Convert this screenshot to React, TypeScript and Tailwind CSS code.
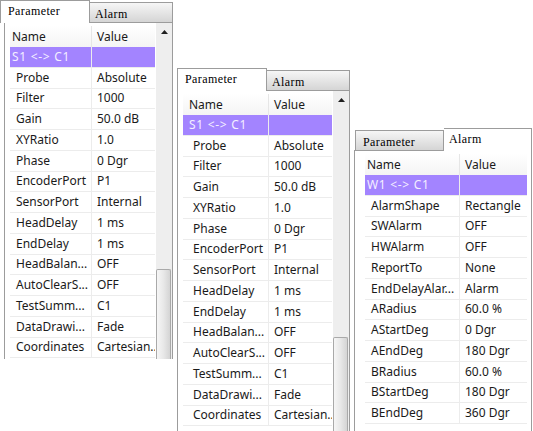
import React from 'react';

type Row = [string, string];

const PARAM_ROWS: Row[] = [
  ['Probe', 'Absolute'],
  ['Filter', '1000'],
  ['Gain', '50.0 dB'],
  ['XYRatio', '1.0'],
  ['Phase', '0 Dgr'],
  ['EncoderPort', 'P1'],
  ['SensorPort', 'Internal'],
  ['HeadDelay', '1 ms'],
  ['EndDelay', '1 ms'],
  ['HeadBalan...', 'OFF'],
  ['AutoClearS...', 'OFF'],
  ['TestSumm...', 'C1'],
  ['DataDrawi...', 'Fade'],
  ['Coordinates', 'Cartesian...'],
];

const ALARM_ROWS: Row[] = [
  ['AlarmShape', 'Rectangle'],
  ['SWAlarm', 'OFF'],
  ['HWAlarm', 'OFF'],
  ['ReportTo', 'None'],
  ['EndDelayAlar...', 'Alarm'],
  ['ARadius', '60.0 %'],
  ['AStartDeg', '0 Dgr'],
  ['AEndDeg', '180 Dgr'],
  ['BRadius', '60.0 %'],
  ['BStartDeg', '180 Dgr'],
  ['BEndDeg', '360 Dgr'],
];

interface PanelProps {
  pos: string;
  frame: string;
  inset: string;
  nameW: string;
  valueW: string;
  headPad: string;
  rowPad: string;
  strip: string;
  active: 'Parameter' | 'Alarm';
  title: string;
  rows: Row[];
  scroll?: boolean;
}

function Scrollbar() {
  return (
    <div className="ml-auto flex h-full w-[16px] flex-none flex-col bg-[#eeeeee]">
      <div className="flex h-[17px] flex-none items-center justify-center">
        <svg width="7" height="4" viewBox="0 0 7 4">
          <path d="M3.5 0L7 4H0z" fill="#1f1f1f" />
        </svg>
      </div>
      <div className="h-[229px] flex-none" />
      <div className="mr-px flex-1 rounded-t-[2px] border border-b-0 border-[#a9a9a9] bg-gradient-to-r from-[#f6f6f6] via-[#e8e8e8] to-[#d4d4d4]" />
    </div>
  );
}

function Panel({ pos, frame, inset, nameW, valueW, headPad, rowPad, strip, active, title, rows, scroll }: PanelProps) {
  const onParam = active === 'Parameter';
  return (
    <div className={`absolute ${pos}`}>
      {/* tabs */}
      <div className={`flex h-[22px] items-end font-['Liberation_Serif',serif] text-[12px] leading-[14px] tracking-[0.4px] text-black ${strip}`}>
        {onParam ? (
          <>
            <div className="relative z-10 -mb-px h-[23px] w-[90px] flex-none border border-b-0 border-[#9c9c9c] bg-white pl-[7px] pt-[3px]">
              Parameter
            </div>
            <div className="h-[20px] flex-1 border border-b-0 border-l-0 border-[#9c9c9c] bg-gradient-to-b from-[#f6f6f6] to-[#d5d5d5] pl-[5px] pt-[4px]">
              Alarm
            </div>
          </>
        ) : (
          <>
            <div className="ml-px h-[20px] w-[89px] flex-none border border-b-0 border-[#9c9c9c] bg-gradient-to-b from-[#f6f6f6] to-[#d5d5d5] pl-[7px] pt-[4px]">
              Parameter
            </div>
            <div className="relative z-10 -mb-px h-[23px] flex-1 border border-b-0 border-l-0 border-[#9c9c9c] bg-white pl-[5px] pt-[3px]">
              Alarm
            </div>
          </>
        )}
      </div>

      {/* page frame */}
      <div className={`flex w-full overflow-hidden border border-b-0 border-[#9c9c9c] bg-white ${frame}`}>
        <div className={`flex-none pt-[3px] ${inset}`}>
          <div className="font-['Noto_Sans',sans-serif] text-[12px] leading-none text-[#1a1a1a]">
            <div className="flex h-[21px] bg-gradient-to-b from-white to-[#f4f4f4]">
              <div className={`flex items-center ${nameW} ${headPad}`}>Name</div>
              <div className={`flex items-center border-l border-[#e6e6e6] pl-[5px] ${valueW}`}>Value</div>
            </div>
            <div className="flex h-[20.75px] border-b border-[#ececec]">
              <div className={`flex items-center whitespace-nowrap bg-[#a384ff] tracking-[0.7px] text-[#f3efff] ${nameW} ${headPad}`}>
                {title}
              </div>
              <div className={`border-l border-[#ececec] bg-[#a384ff] ${valueW}`} />
            </div>
            {rows.map(([name, value]) => (
              <div key={name} className="flex h-[20.75px] border-b border-[#ececec]">
                <div className={`flex items-center overflow-hidden whitespace-nowrap ${nameW} ${rowPad}`}>{name}</div>
                <div className={`flex items-center overflow-hidden whitespace-nowrap border-l border-[#ececec] pl-[5px] ${valueW}`}>
                  {value}
                </div>
              </div>
            ))}
          </div>
        </div>
        {scroll && <Scrollbar />}
      </div>
    </div>
  );
}

export default function App() {
  return (
    <div className="relative h-[431px] w-[533px] overflow-hidden bg-white">
      <Panel
        pos="left-[4px] top-0 w-[169px]"
        frame="h-[337px]"
        inset="pl-[5px]"
        nameW="w-[81px]"
        valueW="w-[64px]"
        headPad="pl-[2px]"
        rowPad="pl-[6px]"
        strip="ml-[-4px]"
        active="Parameter"
        title="S1 <-> C1"
        rows={PARAM_ROWS}
        scroll
      />
      <Panel
        pos="left-[177px] top-[68px] w-[173px]"
        frame="h-[400px]"
        inset="pl-[5px]"
        nameW="w-[85px]"
        valueW="w-[64px]"
        headPad="pl-[6px]"
        rowPad="pl-[10px]"
        strip=""
        active="Parameter"
        title="S1 <-> C1"
        rows={PARAM_ROWS}
        scroll
      />
      <Panel
        pos="left-[354px] top-[128px] w-[178px]"
        frame="h-[400px]"
        inset="pl-[10px]"
        nameW="w-[94px]"
        valueW="w-[68px]"
        headPad="pl-[2px]"
        rowPad="pl-[6px]"
        strip=""
        active="Alarm"
        title="W1 <-> C1"
        rows={ALARM_ROWS}
      />
    </div>
  );
}
